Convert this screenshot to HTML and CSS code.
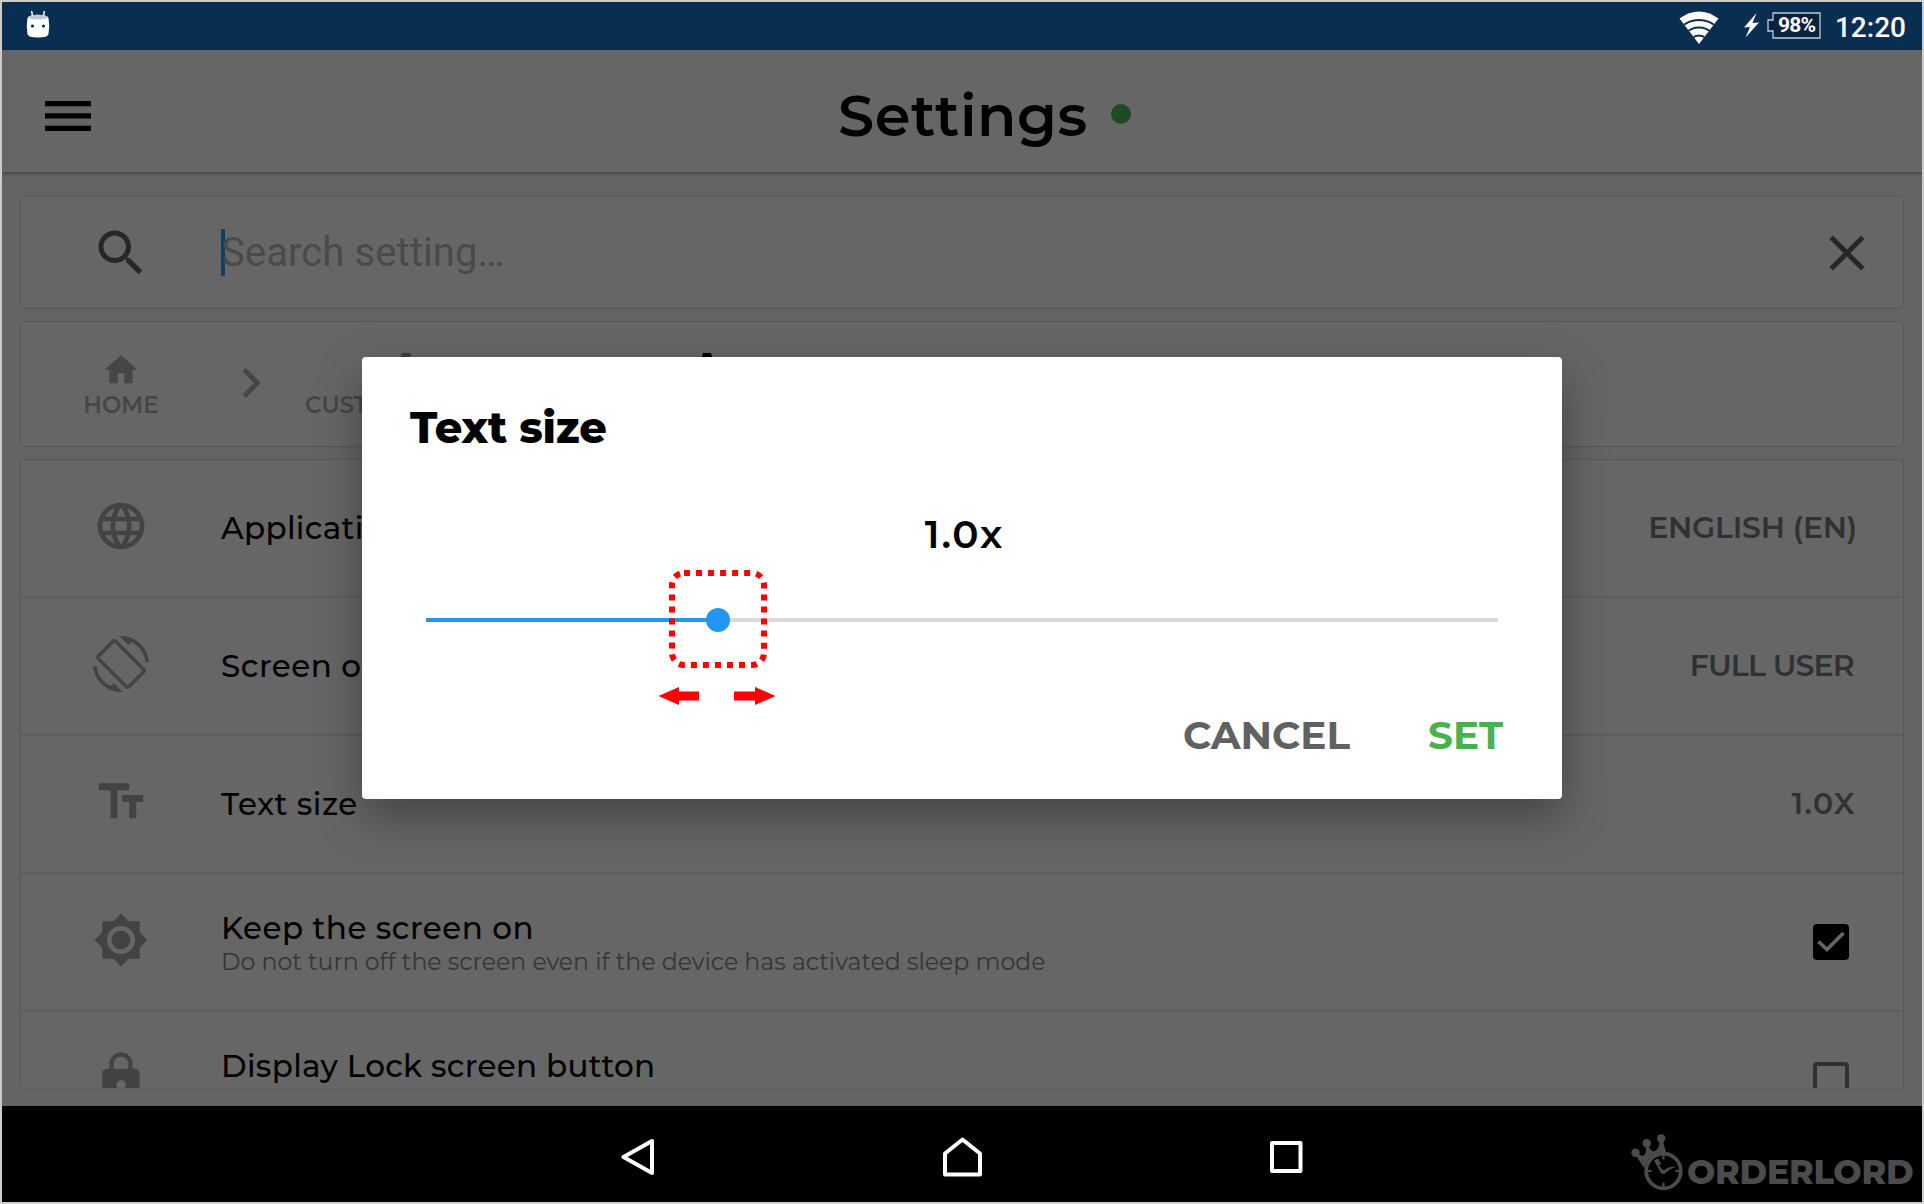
FILE: index.html
```html
<!DOCTYPE html>
<html lang="en">
<head>
<meta charset="utf-8">
<title>Settings</title>
<link rel="stylesheet" href="styles.css">
</head>
<body>
<div class="device">
  <div class="status">
    <svg class="droid" width="24" height="28" viewBox="0 0 24 28">
      <path d="M5.500 1l1.200 5M18.500 1l-1.200 5" stroke="#fff" stroke-width="1.500"/>
      <path d="M1.500 8Q2 6 5 5.500Q12 4 19 5.500Q22 6 22.500 8Q24 16 22.500 24Q22 27.500 12 27.500Q2 27.500 1.500 24Q0 16 1.500 8Z" fill="#fff"/>
      <path d="M2 7.500Q4 4.800 12 4.800Q20 4.800 22 7.500Q19 9.600 12 9.600Q5 9.600 2 7.500Z" fill="#bcc8d6"/>
      <circle cx="6.500" cy="16" r="1.600" fill="#0a2e52"/><circle cx="17.500" cy="16" r="1.600" fill="#0a2e52"/>
    </svg>
    <div class="status-right">
      <svg class="wifi" width="40" height="34" viewBox="0 0 40 34">
        <clipPath id="fan"><path d="M0.500 7.500Q20 -6.500 39.500 7.500L20 33Z"/></clipPath>
        <g clip-path="url(#fan)">
          <path d="M0 0H40V34H0Z" fill="#fff"/>
          <g fill="none" stroke="#0a2e52" stroke-width="2"><circle cx="20" cy="35" r="26"/><circle cx="20" cy="35" r="18.500"/><circle cx="20" cy="34" r="9.500"/></g>
        </g>
      </svg>
      <svg class="bolt" width="15" height="25" viewBox="0 0 15 25"><path d="M12.500 0L0 14.500L6 14L1.500 24.500L15 9.500L8.500 10Z" fill="#fff"/></svg>
      <div class="battery">
        <svg width="54" height="27" viewBox="0 0 54 27"><path d="M6 1H53V26H6V19H1V8H6Z" fill="#08213c" stroke="#c3cbd4" stroke-width="1.300"/></svg>
        <span class="pct">98%</span>
      </div>
      <span class="clock">12:20</span>
    </div>
  </div>

  <header class="bar">
    <svg class="menu" width="46" height="31" viewBox="0 0 46 31"><path d="M0 0H46V5.300H0ZM0 12.300H46V17.600H0ZM0 24.700H46V30H0Z"/></svg>
    <h1 class="title"><span class="t t-title">Settings</span><i class="online"></i></h1>
  </header>

  <main class="content">
    <section class="card search">
      <svg class="search-icon" width="60" height="60" viewBox="0 0 24 24"><path fill="#272727" d="M15.500 14h-.79l-.28-.27C15.410 12.590 16 11.110 16 9.500 16 5.910 13.090 3 9.500 3S3 5.910 3 9.500 5.910 16 9.500 16c1.610 0 3.090-.59 4.230-1.570l.27.28v.79l5 4.990L20.490 19l-4.990-5zm-6 0C7.010 14 5 11.990 5 9.500S7.010 5 9.500 5 14 7.010 14 9.500 11.990 14 9.500 14z"/></svg>
      <i class="caret"></i><span class="placeholder">Search setting…</span>
      <svg class="clear" width="60" height="60" viewBox="0 0 24 24"><path fill="#272727" d="M19 6.410L17.590 5 12 10.590 6.410 5 5 6.410 10.590 12 5 17.590 6.410 19 12 13.410 17.590 19 19 17.590 13.410 12z"/></svg>
    </section>

    <section class="card crumbs">
      <div class="crumb">
        <svg width="40" height="40" viewBox="0 0 24 24"><path fill="#464646" d="M10 20v-6h4v6h5v-8h3L12 3 2 12h3v8z"/></svg>
        <span class="t t-crumb">HOME</span>
      </div>
      <svg class="chevron" width="60" height="60" viewBox="0 0 24 24"><path fill="#464646" d="M10 6L8.590 7.410 13.170 12l-4.580 4.590L10 18l6-6z"/></svg>
      <div class="crumb crumb-custom">
        <svg width="40" height="40" viewBox="0 0 40 40"><path fill="#3c3c3c" d="M16 3h8l2 7h-12z"/></svg>
        <span class="t t-crumb">CUSTOMIZATION</span>
      </div>
      <div class="crumb crumb-display">
        <svg width="40" height="40" viewBox="0 0 40 40"><path d="M16 3h8l2 7h-12z"/></svg>
      </div>
    </section>

    <section class="card list">
      <div class="row">
        <svg class="ico" viewBox="0 0 24 24"><path d="M11.990 2C6.470 2 2 6.480 2 12s4.470 10 9.990 10C17.520 22 22 17.520 22 12S17.520 2 11.990 2zm6.930 6h-2.950c-.32-1.250-.78-2.450-1.380-3.560 1.840.63 3.370 1.910 4.330 3.560zM12 4.040c.83 1.200 1.480 2.530 1.910 3.960h-3.820c.43-1.430 1.080-2.760 1.910-3.960zM4.260 14C4.100 13.360 4 12.690 4 12s.1-1.360.26-2h3.380c-.08.66-.14 1.320-.14 2 0 .68.06 1.340.14 2H4.260zm.82 2h2.950c.32 1.250.78 2.450 1.380 3.560-1.840-.63-3.370-1.900-4.330-3.560zm2.950-8H5.080c.96-1.660 2.490-2.930 4.330-3.560C8.810 5.550 8.350 6.750 8.030 8zM12 19.960c-.83-1.200-1.480-2.530-1.910-3.960h3.820c-.43 1.430-1.080 2.760-1.910 3.960zM14.340 14H9.660c-.09-.66-.16-1.320-.16-2 0-.68.07-1.350.16-2h4.680c.09.65.16 1.320.16 2 0 .68-.07 1.340-.16 2zm.25 5.560c.6-1.110 1.060-2.310 1.380-3.560h2.950c-.96 1.650-2.490 2.930-4.330 3.560zM16.360 14c.08-.66.14-1.320.14-2 0-.68-.06-1.340-.14-2h3.380c.16.64.26 1.310.26 2s-.1 1.360-.26 2h-3.380z"/></svg>
        <div class="labels"><span class="t t-label">Application language</span></div>
        <span class="t t-value v-en">ENGLISH (EN)</span>
      </div>
      <div class="row">
        <svg class="ico" viewBox="0 0 24 24"><path d="M16.480 2.520c3.270 1.550 5.610 4.720 5.970 8.480h1.500C23.440 4.840 18.290 0 12 0l-.66.03 3.810 3.810 1.330-1.320zm-6.250-.77c-.59-.59-1.540-.59-2.120 0L1.750 8.110c-.59.59-.59 1.540 0 2.120l12.020 12.020c.59.59 1.540.59 2.120 0l6.360-6.360c.59-.59.59-1.540 0-2.120L10.230 1.750zm4.600 19.440L2.810 9.170l6.360-6.360 12.020 12.020-6.360 6.360zm-7.310.29C4.250 19.940 1.910 16.760 1.550 13H.05C.56 19.160 5.710 24 12 24l.66-.03-3.810-3.810-1.330 1.320z"/></svg>
        <div class="labels"><span class="t t-label l-screen">Screen orientation</span></div>
        <span class="t t-value v-user">FULL USER</span>
      </div>
      <div class="row">
        <svg class="ico" viewBox="0 0 24 24"><path d="M2.500 4v3h5v12h3V7h5V4h-13zm19 5h-9v3h3v7h3v-7h3V9z"/></svg>
        <div class="labels"><span class="t t-label l-size">Text size</span></div>
        <span class="t t-value v-one">1.0X</span>
      </div>
      <div class="row">
        <svg class="ico" viewBox="0 0 24 24"><path d="M20 8.690V4h-4.690L12 .69 8.690 4H4v4.690L.69 12 4 15.310V20h4.690L12 23.310 15.310 20H20v-4.690L23.310 12 20 8.690zM12 18c-3.310 0-6-2.690-6-6s2.690-6 6-6 6 2.690 6 6-2.690 6-6 6zm0-10c-2.210 0-4 1.790-4 4s1.790 4 4 4 4-1.790 4-4-1.790-4-4-4z"/></svg>
        <div class="labels two"><span class="t t-label l-keep">Keep the screen on</span><span class="t t-sub">Do not turn off the screen even if the device has activated sleep mode</span></div>
        <svg class="check" width="36" height="36" viewBox="0 0 36 36"><rect width="36" height="36" rx="4"/><path d="M5.500 17.500L14 25.500L30.500 9" fill="none" stroke="#666" stroke-width="3.600"/></svg>
      </div>
      <div class="row">
        <svg class="ico" viewBox="0 0 24 24"><path d="M18 8h-1V6c0-2.760-2.240-5-5-5S7 3.240 7 6v2H6c-1.100 0-2 .9-2 2v10c0 1.100.9 2 2 2h12c1.100 0 2-.9 2-2V10c0-1.100-.9-2-2-2zm-6 9c-1.100 0-2-.9-2-2s.9-2 2-2 2 .9 2 2-.9 2-2 2zm3.100-9H8.900V6c0-1.710 1.390-3.100 3.100-3.100 1.710 0 3.100 1.390 3.100 3.100v2z"/></svg>
        <div class="labels two"><span class="t t-label l-lock">Display Lock screen button</span><span class="t t-sub">&nbsp;</span></div>
        <svg class="check" width="36" height="36" viewBox="0 0 36 36"><rect x="2" y="2" width="32" height="32" rx="2" fill="none" stroke="#303232" stroke-width="4"/></svg>
      </div>
    </section>
  </main>

  <nav class="nav">
    <svg width="34" height="38" viewBox="0 0 34 38"><path d="M31 3V35L2.500 19Z"/></svg>
    <svg width="40" height="40" viewBox="0 0 40 40"><path d="M20.500 2.500L38 16.500V37.500H3V16.500Z"/></svg>
    <svg width="34" height="34" viewBox="0 0 34 34"><path d="M3 3H31.500V31H3Z"/></svg>
  </nav>

  <div class="brand">
    <svg width="56" height="58" viewBox="0 0 56 58">
      <g fill="#4b4b4b">
        <circle cx="4.500" cy="18.800" r="4.200"/><circle cx="15.800" cy="9.200" r="4.200"/><circle cx="30.200" cy="4.500" r="4.200"/>
        <path d="M4 20L13 34Q19 23 36 22L31.500 5L28.500 6Q29 15 23 17.500Q18 16 17 10L14.500 11Q16 18 13 21.500Q9 22.500 6 18Z"/>
      </g>
      <circle cx="32.500" cy="37" r="19" fill="#000"/>
      <circle cx="32.500" cy="37" r="17.300" fill="none" stroke="#4b4b4b" stroke-width="3.800"/>
      <g fill="none" stroke="#4b4b4b" stroke-width="2.200"><path d="M32.500 21v4.500M32.500 48.500v4.500M16 37h4.500M44.500 37h4.500M24.500 26L31 39"/><path d="M25 25.500l3 5.500" stroke-width="4.500"/></g>
      <path d="M29.500 34L33 36.500Q38 32 45.500 32.500Q38 35 34 39.500Q31 41.500 30.500 38Z" fill="#4b4b4b"/>
    </svg>
    <span class="t t-brand">ORDERLORD</span>
  </div>

  <div class="dialog">
    <h2 class="dlg-title"><span class="t t-dlg">Text size</span></h2>
    <div class="dlg-value"><span class="t t-num">1.0x</span></div>
    <div class="slider"><i class="fill"></i><i class="thumb"></i></div>
    <div class="actions"><span class="t t-cancel">CANCEL</span><span class="t t-set">SET</span></div>
    <svg class="hint" width="120" height="138" viewBox="0 0 120 138">
      <rect x="15" y="4" width="92" height="92" rx="12" fill="none" stroke="#f00" stroke-width="6" stroke-dasharray="6 6.030"/>
      <path fill="#f00" d="M1.500 127L22 118V122.500H42V131.500H22V136ZM118.500 127L98 118V122.500H77V131.500H98V136Z"/>
    </svg>
  </div>
</div>
</body>
</html>
```
FILE: styles.css
```css
* { box-sizing: border-box; }
body { margin: 0; background: #ccc; font-family: Montserrat, Inter, "Liberation Sans", sans-serif; }
svg { display: block; flex: none; }
.device { position: relative; width: 1924px; height: 1204px; border: 2px solid #ccc; background: #646464; display: flex; flex-direction: column; overflow: hidden; }
.t { white-space: nowrap; display: block; }

.status { height: 48px; flex: none; background: #0a2e52; color: #fff; display: flex; justify-content: space-between; padding: 8px 16px 0 24px; font-family: Roboto, sans-serif; }
.status-right { display: flex; }
.wifi { margin: 1px 25px 0 0; }
.bolt { margin: 3px 8px 0 0; }
.battery { position: relative; margin: 2px 14px 0 0; }
.pct { position: absolute; left: 11px; top: 1px; font-size: 21px; line-height: 24px; font-weight: 700; letter-spacing: -.8px; }
.clock { font-size: 28px; line-height: 36px; font-weight: 500; }

.bar { height: 122px; flex: none; display: flex; align-items: center; background: #666; box-shadow: 0 1px 3px 1px rgba(0,0,0,.28); position: relative; }
.menu { margin-left: 43px; margin-top: 11px; }
.title { margin: 0; padding: 7px 0 0 747px; display: flex; align-items: center; font-weight: 600; }
.t-title { font-size: 57.500px; line-height: 70px; letter-spacing: .5px; width: 248px; }
.online { width: 20px; height: 20px; border-radius: 50%; background: #1f4a22; margin: -1px 0 0 25px; }

.content { flex: 1; padding: 24px 18px 0 18px; display: flex; flex-direction: column; }
.card { background: #666; border: 1px solid #585858; border-radius: 4px; flex: none; }
.search { height: 113px; margin-bottom: 12px; display: flex; align-items: center; }
.search-icon { margin: 0 0 0 70px; }
.caret { width: 4px; height: 47px; background: #0f4064; margin-left: 70px; }
.placeholder { font: 40px/48px Roboto, sans-serif; color: #4a4a4a; margin-left: -4px; letter-spacing: .1px; flex: 1; }
.clear { margin-right: 26px; }

.crumbs { height: 126px; margin-bottom: 12px; display: flex; align-items: flex-start; padding: 28px 0 0 60px; }
.crumb { display: flex; flex-direction: column; align-items: center; width: 80px; }
.t-crumb { color: #464646; font-size: 23px; line-height: 30px; font-weight: 600; }
.chevron { margin: 3px 0 0 60px; }
.crumb-custom { width: 204px; margin-left: 23px; }
.crumb-display { margin-left: 159px; }

.list { height: 630px; border-radius: 3px; border-bottom-color: #616161; overflow: hidden; }
.row { height: 138px; border-bottom: 2px solid #5d5d5d; display: flex; align-items: center; padding: 0 50px 0 72px; }
.ico { width: 56px; height: 56px; fill: #424344; margin-top: -4px; }
.labels { flex: 1; margin-left: 72px; }
.t-label { font-size: 31px; line-height: 38px; font-weight: 500; color: #000; letter-spacing: .3px; }
.l-screen, .l-size, .l-keep { letter-spacing: .5px; }
.two { padding-top: 1px; }
.t-sub { font-size: 23.6px; line-height: 30px; color: #343636; }
.t-value { font-size: 30px; line-height: 38px; font-weight: 600; color: #303232; }
.v-en { letter-spacing: -.25px; margin-right: -4px; }
.v-user { letter-spacing: -.8px; margin-right: -1px; }
.v-one { letter-spacing: 1.500px; margin-right: -3px; }
.check { margin: 0 4px 0 0; }

.nav { height: 96px; flex: none; background: #000; display: grid; grid-template-columns: 324px 324px 324px; justify-content: center; align-items: center; justify-items: center; padding-top: 6px; }
.nav path { fill: none; stroke: #fff; stroke-width: 4; stroke-linejoin: round; }

.brand { position: absolute; right: 6px; bottom: 10px; display: flex; align-items: flex-end; }
.t-brand { font-size: 33.500px; line-height: 40px; font-weight: 800; color: #4b4b4b; width: 229px; letter-spacing: -.3px; }

.dialog { position: absolute; left: 360px; top: 355px; width: 1200px; height: 442px; background: #fff; border-radius: 4px; box-shadow: 0 18px 46px rgba(0,0,0,.34); padding: 43px 48px 0; color: #000; display: flex; flex-direction: column; }
.dlg-title { margin: 0; font-weight: 800; }
.t-dlg { font-size: 43px; line-height: 56px; letter-spacing: -.2px; }
.dlg-value { display: flex; justify-content: center; margin-top: 53px; }
.t-num { font-size: 39px; line-height: 50px; font-weight: 600; letter-spacing: 1.800px; margin-left: 5px; }
.slider { position: relative; height: 4px; background: #dadada; margin: 59px 16px 0; }
.fill { position: absolute; left: 0; top: 0; width: 292px; height: 4px; background: #2196f3; }
.thumb { position: absolute; left: 280px; top: -10px; width: 24px; height: 24px; border-radius: 50%; background: #2196f3; }
.actions { display: flex; margin: 88px 0 0 773px; font-size: 39px; line-height: 50px; font-weight: 700; }
.t-cancel { color: #616161; width: 245px; }
.t-set { color: #4caf50; }
.hint { position: absolute; left: 295px; top: 212px; }
```
